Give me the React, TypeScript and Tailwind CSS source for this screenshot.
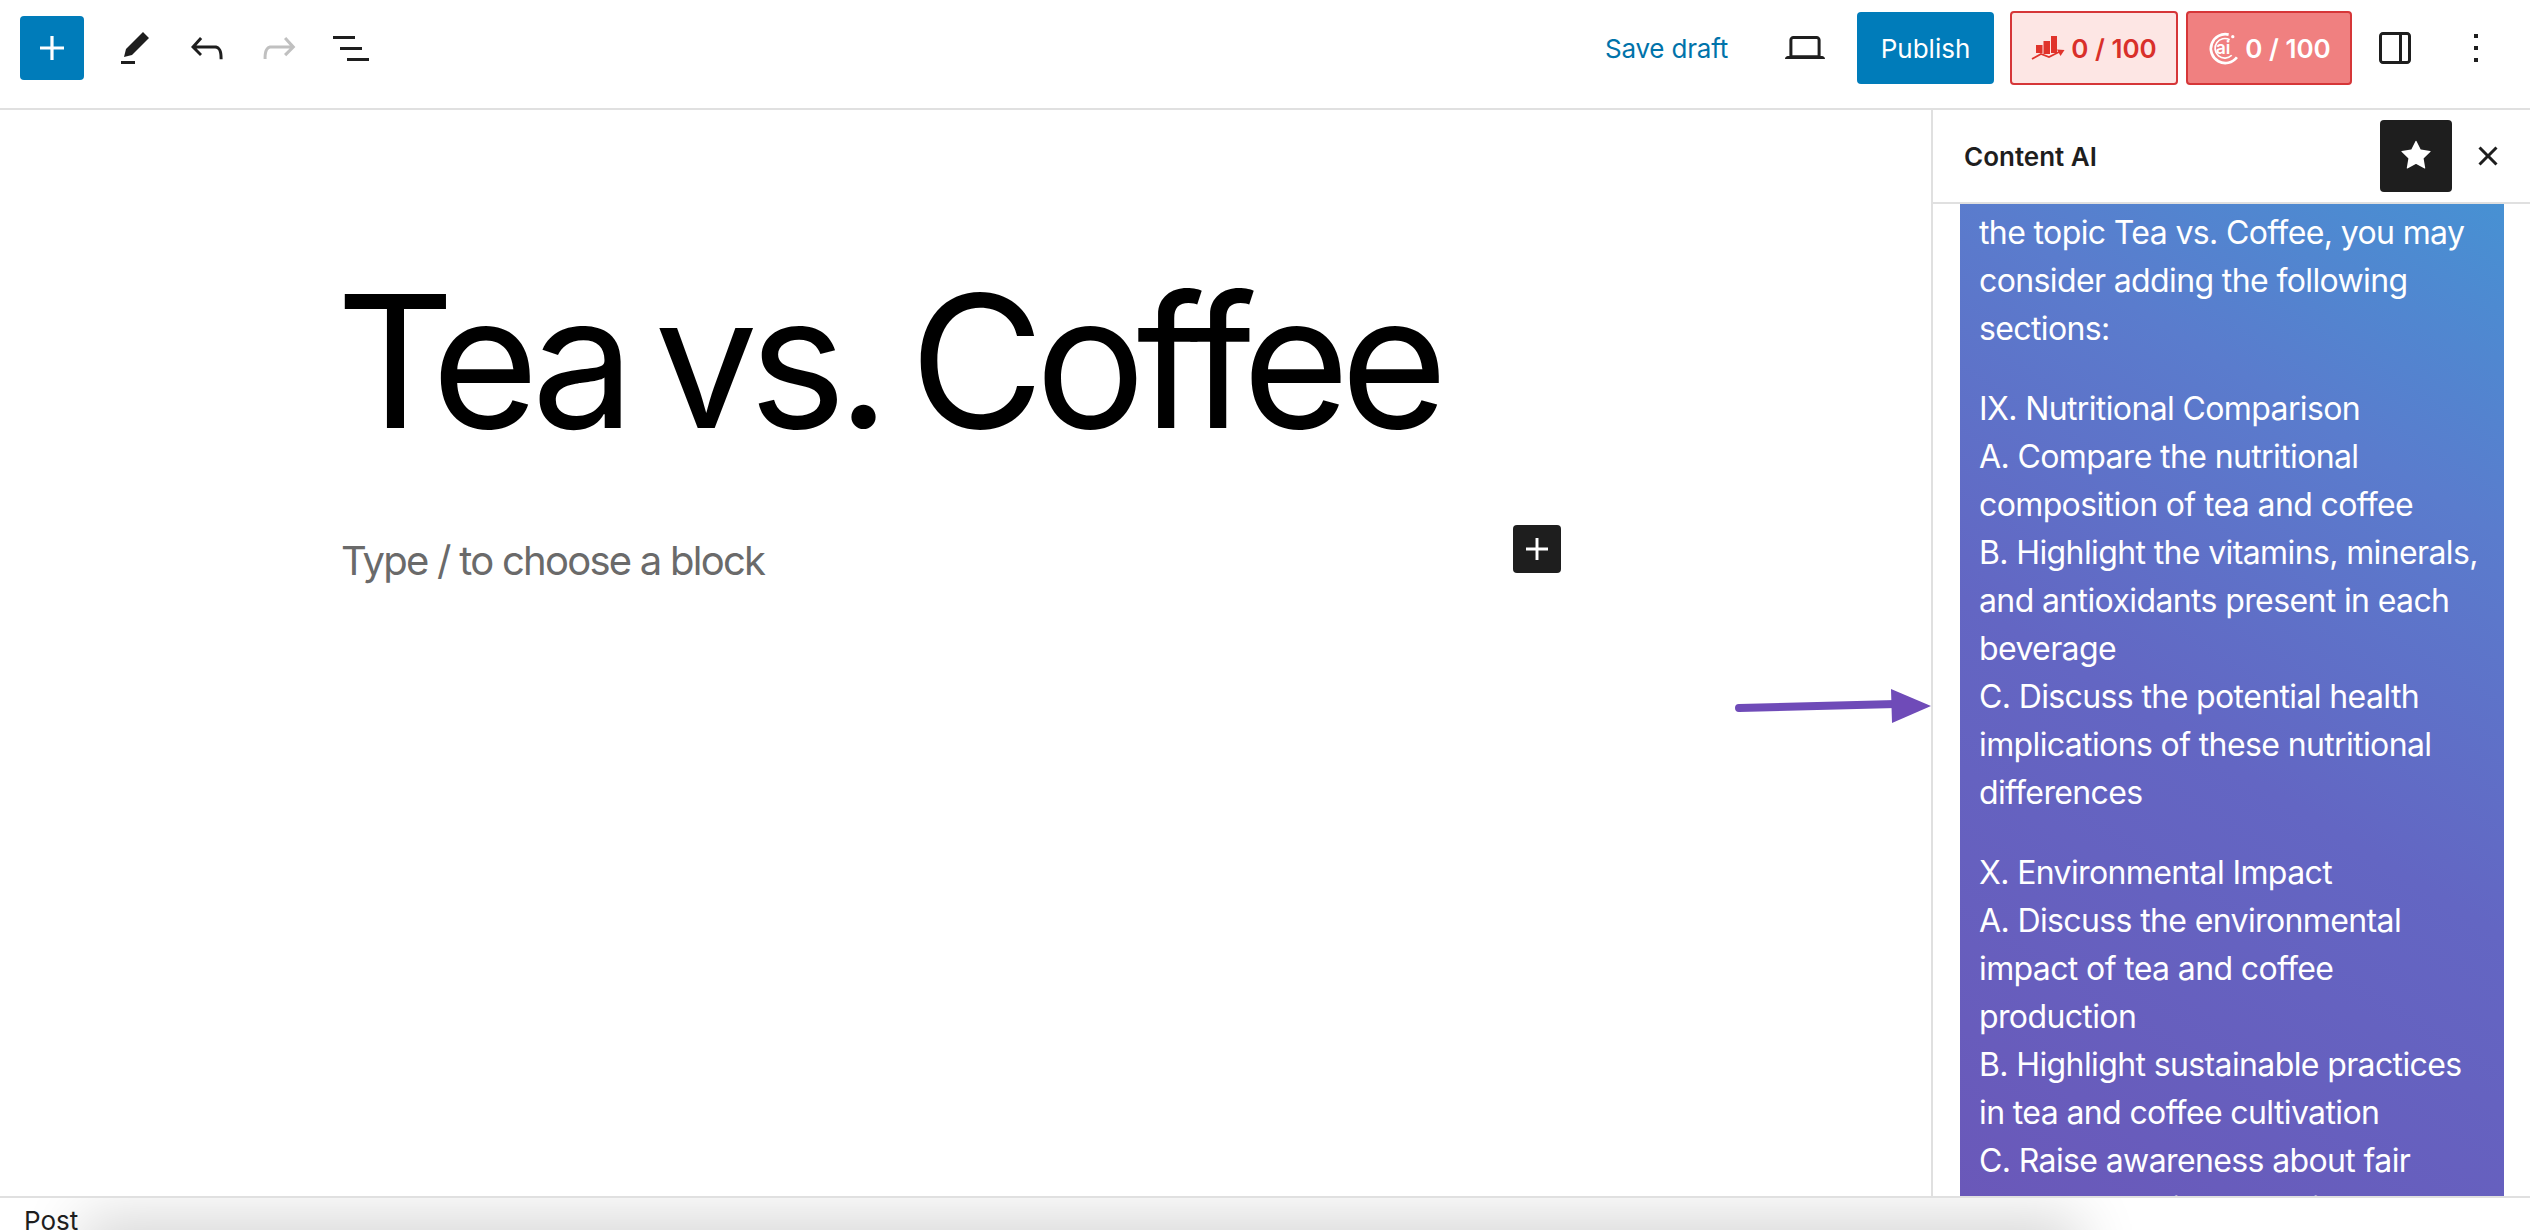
import React from 'react';

const WpIcon = ({ d, className }: { d: string; className?: string }) => (
  <svg viewBox="0 0 24 24" className={className} fill="currentColor">
    <path d={d} />
  </svg>
);

const icons = {
  plus: 'M18 11.2h-5.2V6h-1.6v5.2H6v1.6h5.2V18h1.6v-5.2H18z',
  pencil: 'm19 7-3-3-8.5 8.5-1 4 4-1L19 7Zm-7 11.5H5V20h7v-1.5Z',
  undo: 'M18.3 11.7c-.6-.6-1.4-.9-2.3-.9H6.7l2.9-3.3-1.1-1-4.5 5L8.5 16l1-1-2.7-2.7H16c.5 0 .9.2 1.3.5 1 1 1 3.4 1 4.5v.3h1.5v-.2c0-1.5 0-4.3-1.5-5.7z',
  redo: 'M15.6 6.5l-1.1 1 2.9 3.3H8c-.9 0-1.7.3-2.3.9-1.4 1.5-1.4 4.2-1.4 5.6v.2h1.5v-.3c0-1.1 0-3.5 1-4.5.3-.3.7-.5 1.3-.5h9.2L14.5 15l1.1 1.1 4.6-4.6-4.6-5z',
  list: 'M3 6h11v1.5H3V6zm3.5 5.5h11V13h-11v-1.5zM21 17H10v1.5h11V17z',
  laptop:
    'M20.5 16h-.7V8c0-1.1-.9-2-2-2H6.2c-1.1 0-2 .9-2 2v8h-.7c-.8 0-1.5.7-1.5 1.5h20c0-.8-.7-1.5-1.5-1.5zM5.7 8c0-.3.2-.5.5-.5h11.6c.3 0 .5.2.5.5v7.6H5.7V8z',
  sidebar:
    'M18 4H6c-1.1 0-2 .9-2 2v12c0 1.1.9 2 2 2h12c1.1 0 2-.9 2-2V6c0-1.1-.9-2-2-2zm-4 14.5H6c-.3 0-.5-.2-.5-.5V6c0-.3.2-.5.5-.5h8v13zm4.5-.5c0 .3-.2.5-.5.5h-2.5v-13H18c.3 0 .5.2.5.5v12z',
  more: 'M13 19h-2v-2h2v2zm0-6h-2v-2h2v2zm0-6h-2V5h2v2z',
  star: 'M11.776 4.454a.25.25 0 01.448 0l2.069 4.192a.25.25 0 00.188.137l4.626.672a.25.25 0 01.139.426l-3.348 3.263a.25.25 0 00-.072.222l.79 4.607a.25.25 0 01-.362.263l-4.138-2.175a.25.25 0 00-.232 0l-4.138 2.175a.25.25 0 01-.363-.263l.79-4.607a.25.25 0 00-.071-.222L4.754 9.881a.25.25 0 01.139-.426l4.626-.672a.25.25 0 00.188-.137l2.069-4.192z',
  close:
    'M12 13.06l3.712 3.713 1.061-1.06L13.061 12l3.712-3.712-1.06-1.06L12 10.938 8.288 7.227l-1.061 1.06L10.939 12l-3.712 3.712 1.06 1.061L12 13.061z',
};

const RankIcon = () => (
  <svg viewBox="0 0 34 24" className="h-[24px] w-[34px]">
    <rect x="5" y="9" width="6.5" height="8" fill="#e0332b" />
    <rect x="12.5" y="5" width="6.5" height="13" fill="#e0332b" />
    <rect x="20" y="0" width="6" height="17" fill="#e0332b" />
    <path d="M1 23 L10 18 L18 21 L28 16" stroke="#e0332b" strokeWidth="1.8" fill="none" />
    <path d="M26 13.5 L33.5 14 L29.5 20 Z" fill="#e0332b" />
  </svg>
);

const AiIcon = () => (
  <svg viewBox="0 0 32 32" className="h-[36px] w-[33px]">
    <path d="M21 3 A14 14 0 1 0 29 25" stroke="#fff" strokeWidth="2.6" fill="none" />
    <path d="M22 8 A9.5 9.5 0 1 0 24 23" stroke="#fff" strokeWidth="1.6" fill="none" />
    <circle cx="25" cy="5" r="1.6" fill="#fff" />
    <text x="8.5" y="21.5" fontSize="17" fontWeight="600" fill="#fff" fontFamily="Inter, sans-serif">
      ai
    </text>
  </svg>
);

const Panel = () => (
  <div className="w-[544px] h-full overflow-hidden bg-[linear-gradient(32deg,#6a58b9_0%,#6366c3_45%,#5a7ccd_75%,#4791d3_100%)] pl-[19px] pr-[10px] pt-[5px] text-[32px] leading-[48px] tracking-[-0.62px] text-white">
    <p>
      the topic Tea vs. Coffee, you may
      <br />
      consider adding the following
      <br />
      sections:
    </p>
    <p className="mt-[32px]">
      IX. Nutritional Comparison
      <br />
      A. Compare the nutritional
      <br />
      composition of tea and coffee
      <br />
      B. Highlight the vitamins, minerals,
      <br />
      and antioxidants present in each
      <br />
      beverage
      <br />
      C. Discuss the potential health
      <br />
      implications of these nutritional
      <br />
      differences
    </p>
    <p className="mt-[32px]">
      X. Environmental Impact
      <br />
      A. Discuss the environmental
      <br />
      impact of tea and coffee
      <br />
      production
      <br />
      B. Highlight sustainable practices
      <br />
      in tea and coffee cultivation
      <br />
      C. Raise awareness about fair
      <br />
      trade and ethical sourcing
    </p>
  </div>
);

export default function App() {
  return (
    <div className="w-[2530px] h-[1230px] overflow-hidden flex flex-col bg-white font-['Inter',sans-serif] text-[#1e1e1e]">
      <header className="h-[110px] shrink-0 flex items-center justify-between border-b-2 border-[#e0e0e0] pl-[20px] pr-[30px] pb-[12px]">
        <div className="flex items-center">
          <div className="w-[64px] h-[64px] rounded-[4px] bg-[#007cba] text-white flex items-center justify-center">
            <WpIcon d={icons.plus} className="w-[48px] h-[48px]" />
          </div>
          <div className="flex items-center gap-[24px] ml-[27px]">
            <WpIcon d={icons.pencil} className="w-[48px] h-[48px]" />
            <WpIcon d={icons.undo} className="w-[48px] h-[48px]" />
            <WpIcon d={icons.redo} className="w-[48px] h-[48px] text-[#c0c0c0]" />
            <WpIcon d={icons.list} className="w-[48px] h-[48px]" />
          </div>
        </div>
        <div className="flex items-center">
          <span className="text-[26px] tracking-[-0.2px] text-[#0073aa]">Save draft</span>
          <WpIcon d={icons.laptop} className="w-[48px] h-[48px] ml-[53px]" />
          <div className="ml-[28px] h-[72px] w-[137px] rounded-[4px] bg-[#007cba] text-white text-[26px] flex items-center justify-center">
            Publish
          </div>
          <div className="ml-[16px] h-[74px] w-[168px] rounded-[4px] border-2 border-[#d63638] bg-[#fde6e4] text-[#d9302a] text-[26px] font-semibold flex items-center justify-center gap-[6px]">
            <RankIcon />
            0 / 100
          </div>
          <div className="ml-[8px] h-[74px] w-[166px] rounded-[4px] border-2 border-[#d63638] bg-[#f08080] text-white text-[26px] font-semibold flex items-center justify-center gap-[5px]">
            <AiIcon />
            0 / 100
          </div>
          <WpIcon d={icons.sidebar} className="w-[48px] h-[48px] ml-[19px]" />
          <WpIcon d={icons.more} className="w-[48px] h-[48px] ml-[33px]" />
        </div>
      </header>

      <div className="flex-1 min-h-0 flex">
        <main className="relative flex-1 pl-[341px] pt-[141px]">
          <h1 className="-ml-[5px] text-[184px] leading-[1.2] font-normal tracking-[-9px] [word-spacing:-14px] text-black">Tea vs. Coffee</h1>
          <div className="w-[1220px] mt-[53px] flex items-start justify-between">
            <p className="text-[40px] leading-[60px] tracking-[-1.75px] text-[#6a6a6a] mt-[6px]">Type / to choose a block</p>
            <div className="w-[48px] h-[48px] rounded-[4px] bg-[#1e1e1e] text-white flex items-center justify-center">
              <WpIcon d={icons.plus} className="w-[44px] h-[44px]" />
            </div>
          </div>
          <svg viewBox="0 0 200 40" className="absolute left-[1731px] top-[578px] w-[200px] h-[40px]">
            <path d="M8 20 L165 16" stroke="#6f4bb8" strokeWidth="8" strokeLinecap="round" fill="none" />
            <path d="M160 1 L200 18 L161 35 Z" fill="#6f4bb8" />
          </svg>
        </main>

        <aside className="w-[599px] shrink-0 border-l-2 border-[#e0e0e0] flex flex-col">
          <div className="h-[94px] shrink-0 border-b-2 border-[#e0e0e0] flex items-center pl-[31px] pr-[18px]">
            <span className="text-[26px] font-semibold flex-1">Content AI</span>
            <div className="w-[72px] h-[72px] rounded-[4px] bg-[#1e1e1e] text-white flex items-center justify-center">
              <WpIcon d={icons.star} className="w-[48px] h-[48px]" />
            </div>
            <WpIcon d={icons.close} className="w-[48px] h-[48px] ml-[12px]" />
          </div>
          <div className="flex-1 min-h-0 pl-[27px]">
            <Panel />
          </div>
        </aside>
      </div>

      <footer className="relative h-[34px] shrink-0 overflow-hidden border-t-2 border-[#e0e0e0] bg-white pl-[24px] text-[26px] leading-[46px]">
        <div className="absolute left-[110px] right-[480px] top-[48px] h-[30px] shadow-[0_0_60px_30px_rgba(0,0,0,0.16)]" />
        <span className="relative">Post</span>
      </footer>
    </div>
  );
}
